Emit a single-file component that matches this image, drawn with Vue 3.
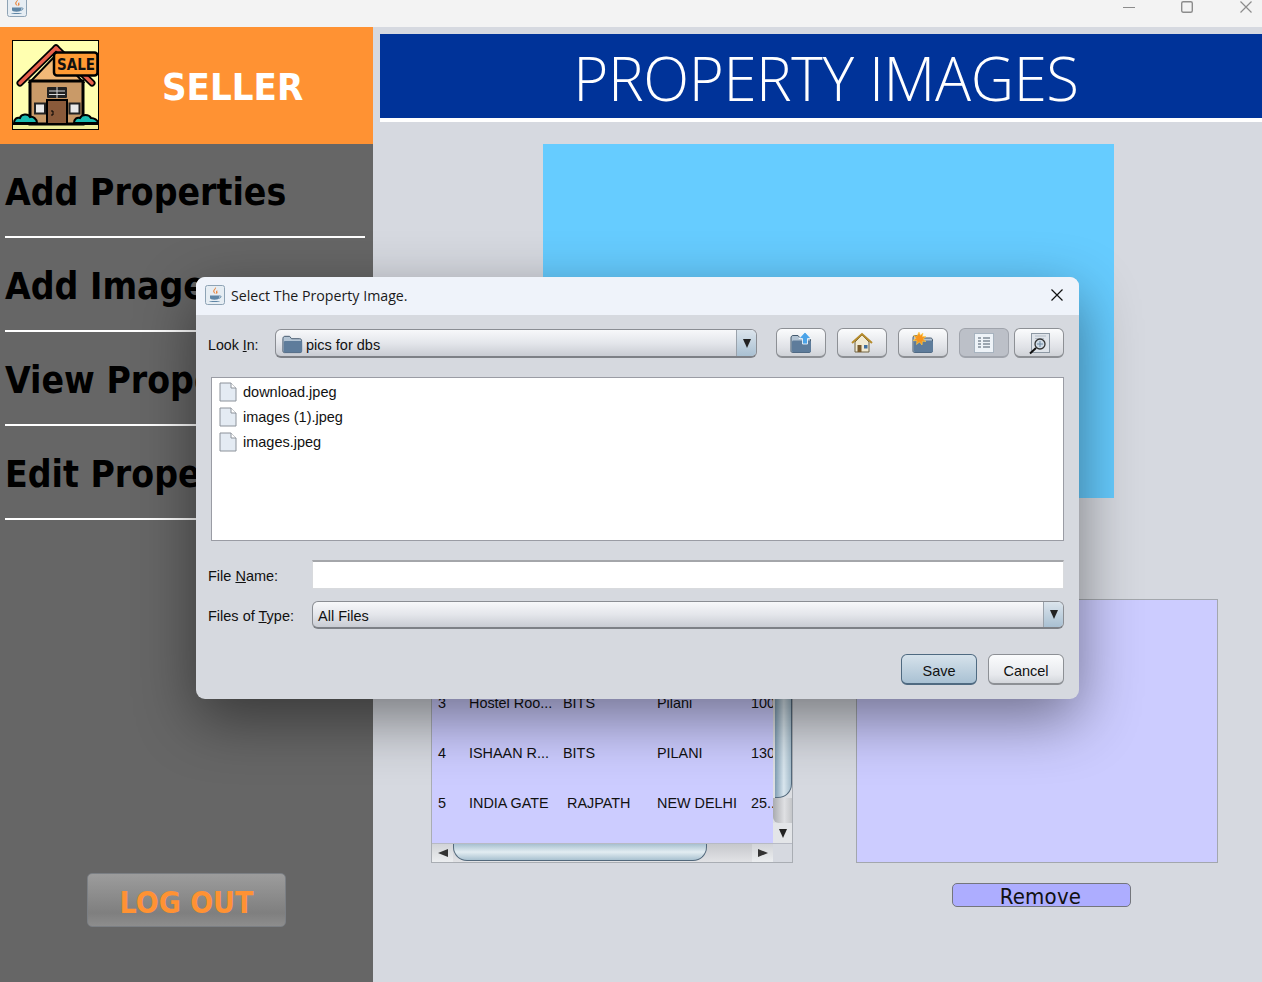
<script setup>
const menu = ['Add Properties', 'Add Images', 'View Properties', 'Edit Properties'];
const files = ['download.jpeg', 'images (1).jpeg', 'images.jpeg'];
const rows = [
  { id: 3, name: 'Hostel Roo...', area: 'BITS', city: 'Pilani', price: '100' },
  { id: 4, name: 'ISHAAN R...', area: 'BITS', city: 'PILANI', price: '130' },
  { id: 5, name: 'INDIA GATE', area: 'RAJPATH', city: 'NEW DELHI', price: '25...', shift: true }
];
</script>

<template>
  <div class="window">
    <svg class="defs" width="0" height="0">
      <symbol id="java" viewBox="0 0 20 20">
        <rect x="0.500" y="0.500" width="19" height="19" rx="2" fill="#e6edf3" stroke="#8ea3b5" />
        <path d="M10.500 2c1.500 2-2 3-1 5 .4.8 1 1.300 1 2-1-.6-2.500-1.500-2.300-3 .2-1.600 2.300-2.300 2.300-4z" fill="#e8833a" />
        <path d="M12.500 5c-.8.8-1.800 1.300-1.500 2.400.2.700.6 1.100.3 1.800 1.300-.8 1.500-1.800 1-2.700-.3-.5-.1-1 .2-1.500z" fill="#e8833a" />
        <path d="M5 10.500h9v2.500c0 1.200-1.500 1.700-4.500 1.700S5 14.200 5 13z" fill="#5f86a6" />
        <path d="M14 11h1.500c.8 0 .8 2-1.500 2.200" fill="none" stroke="#5f86a6" />
        <path d="M4 16h11c-1 1.300-10 1.300-11 0z" fill="#5f86a6" />
      </symbol>
      <symbol id="folder" viewBox="0 0 24 24">
        <path d="M2 7c0-1.500.8-2.500 2-2.500h5l2 2.500h8.500c1.200 0 2 .8 2 2V20c0 .8-.6 1.500-1.500 1.500H3.500C2.600 21.500 2 20.800 2 20z" fill="#b3c4d4" stroke="#43586c" />
        <path d="M3 11c0-1 .6-1.500 1.500-1.500h16c.8 0 1.500.5 1.500 1.500v9c0 .8-.6 1.500-1.500 1.500h-16C3.600 21.500 3 20.800 3 20z" fill="#5e7c9b" />
      </symbol>
      <symbol id="file" viewBox="0 0 18 20">
        <path d="M1 1h11l5 5v13H1z" fill="#e4ebf3" stroke="#8c929a" />
        <path d="M12 1v5h5" fill="#fff" stroke="#8c929a" />
      </symbol>
    </svg>

    <div class="titlebar">
      <svg class="app-icon" width="20" height="20"><use href="#java" /></svg>
      <div class="winbtns">
        <svg width="12" height="14" viewBox="0 0 12 14"><path d="M0 7.500h12" stroke="#8c8c8c" /></svg>
        <svg width="12" height="14" viewBox="0 0 12 14"><rect x="0.700" y="1.700" width="10.600" height="10.600" rx="1.500" fill="none" stroke="#8c8c8c" stroke-width="1.400" /></svg>
        <svg class="win-close" width="12" height="14" viewBox="0 0 12 14"><path d="M.5 1.500l11 11M11.500 1.500l-11 11" stroke="#8c8c8c" stroke-width="1.200" /></svg>
      </div>
    </div>

    <div class="content">
      <aside class="sidebar">
        <div class="brand">
          <svg class="logo" width="87" height="90" viewBox="0 0 87 90">
            <rect x="0.500" y="0.500" width="86" height="89" fill="#ffffb0" stroke="#000" />
            <rect x="1" y="84" width="85" height="5" fill="#f0f09a" />
            <path d="M18 42 45 14 71 42z" fill="#f2b877" stroke="#000" stroke-width="2" />
            <rect x="18" y="41" width="53" height="43" fill="#c99a68" stroke="#000" stroke-width="3" />
            <path d="M8 43 44 8" stroke="#000" stroke-width="7" stroke-linecap="round" />
            <path d="M44 8 80 43" stroke="#000" stroke-width="7" stroke-linecap="round" />
            <path d="M8 43 44 8" stroke="#e8604c" stroke-width="3.500" stroke-linecap="round" />
            <path d="M44 8 80 43" stroke="#e8604c" stroke-width="3.500" stroke-linecap="round" />
            <rect x="35" y="47" width="20" height="11" rx="1" fill="#222" />
            <path d="M37 51h16M37 54.500h16M45 47v11" stroke="#d8d8d8" />
            <rect x="35" y="60" width="20" height="24" fill="#8a5a3a" stroke="#000" stroke-width="2" />
            <path d="M39 71h2v4h-2" fill="none" stroke="#000" />
            <rect x="23" y="63.500" width="10" height="10" fill="#e9e9e9" stroke="#222" stroke-width="2" />
            <rect x="57.500" y="63.500" width="10" height="10" fill="#e9e9e9" stroke="#222" stroke-width="2" />
            <path d="M2 83c0-4 3-6 6-5 1-4 8-5 10-1 3-1 7 2 7 6z" fill="#1abcb0" stroke="#000" stroke-width="2" />
            <path d="M62 83c0-4 3-6 6-5 2-4 9-4 11 0 3 0 7 2 7 5z" fill="#1abcb0" stroke="#000" stroke-width="2" />
            <path d="M1 84h85" stroke="#000" stroke-width="2" />
            <rect x="42" y="12.500" width="43.500" height="23" rx="3" fill="#ff9a33" stroke="#000" stroke-width="2.500" />
            <text x="64" y="30" class="sale" text-anchor="middle">SALE</text>
          </svg>
          <span class="seller">SELLER</span>
        </div>
        <div v-for="item in menu" :key="item" class="menu-item">{{ item }}</div>
        <button class="logout">LOG OUT</button>
      </aside>

      <main class="main">
        <header class="heading">PROPERTY IMAGES</header>
        <div class="image-box"></div>
        <div class="panels">
          <div class="table-pane">
            <div class="table-wrap">
              <div class="rows">
                <div v-for="r in rows" :key="r.id" class="row">
                  <span>{{ r.id }}</span>
                  <span>{{ r.name }}</span>
                  <span :class="{ shifted: r.shift }">{{ r.area }}</span>
                  <span>{{ r.city }}</span>
                  <span>{{ r.price }}</span>
                </div>
              </div>
              <div class="vbar">
                <div class="vthumb"></div>
                <div class="vtrack"></div>
                <div class="varrow"><i class="tri"></i></div>
              </div>
            </div>
            <div class="hbar">
              <div class="harrow"><i class="tri-left"></i></div>
              <div class="htrack"><div class="hthumb"></div></div>
              <div class="harrow"><i class="tri-right"></i></div>
              <div class="corner"></div>
            </div>
          </div>
          <div class="preview-col">
            <div class="preview"></div>
            <button class="remove">Remove</button>
          </div>
        </div>
      </main>
    </div>

    <div class="dialog">
      <div class="dlg-title">
        <svg width="20" height="20"><use href="#java" /></svg>
        <span class="dlg-text">Select The Property Image.</span>
        <svg class="dlg-close" width="12" height="12" viewBox="0 0 12 12"><path d="M.5.5l11 11M11.500.5l-11 11" stroke="#111" stroke-width="1.200" /></svg>
      </div>
      <div class="dlg-body">
        <div class="lookin">
          <label class="lbl lbl-look">Look <u>I</u>n:</label>
          <div class="combo look-combo">
            <svg class="combo-folder" width="23" height="23"><use href="#folder" /></svg>
            <span class="combo-text">pics for dbs</span>
            <div class="combo-arrow"><i class="tri"></i></div>
          </div>
          <div class="tools">
            <button class="tool">
              <svg width="24" height="24" viewBox="0 0 24 24">
                <use href="#folder" />
                <path d="M16 1l6 6.500h-3.500V13h-5V7.500H10z" fill="#4ba3e8" stroke="#fff" stroke-width=".8" />
              </svg>
            </button>
            <button class="tool">
              <svg width="24" height="24" viewBox="0 0 24 24">
                <path d="M5 11v10h14V11L12 4z" fill="#f1ead2" stroke="#6e6243" />
                <path d="M2 12 12 3l10 9" fill="none" stroke="#b58b2c" stroke-width="2" />
                <rect x="7.500" y="14" width="4" height="7" fill="#7a5a2a" />
                <rect x="14" y="14" width="3.500" height="3.500" fill="#3f6f9f" />
              </svg>
            </button>
            <button class="tool">
              <svg width="24" height="24" viewBox="0 0 24 24">
                <use href="#folder" />
                <path d="M8 1l1.400 3.300L12 2l-.6 3.600L15 5.500l-2.700 2.400L15 10.500l-3.600-.3L11 14 8.500 11 5.500 13.500 6 9.800 2 9.500l3-2.200L2.500 4.500 6 5z" fill="#f7941d" stroke="#ffd34d" stroke-width=".6" />
              </svg>
            </button>
            <button class="tool pressed">
              <svg width="20" height="20" viewBox="0 0 20 20">
                <rect x="0.500" y="0.500" width="19" height="19" fill="#eef3f8" stroke="#a7b3bf" />
                <path d="M4 5h3M4 8h3M4 11h3M4 14h3M9 5h7M9 8h7M9 11h7M9 14h7" stroke="#4a5a68" stroke-width="1.200" />
              </svg>
            </button>
            <button class="tool">
              <svg width="24" height="24" viewBox="0 0 24 24">
                <rect x="4.500" y="2.500" width="18" height="19" fill="#dfe4ea" stroke="#8d98a3" />
                <path d="M8 5h11M8 7.500h9" stroke="#b3bcc6" />
                <circle cx="13" cy="13" r="5" fill="#cfdbe6" stroke="#333" stroke-width="1.300" />
                <path d="M10 13h6M13 10v6" stroke="#6f8aa3" />
                <path d="M9 17 3 22.500" stroke="#111" stroke-width="2" />
              </svg>
            </button>
          </div>
        </div>

        <div class="filelist">
          <div v-for="f in files" :key="f" class="file">
            <svg width="18" height="20"><use href="#file" /></svg>
            <span>{{ f }}</span>
          </div>
        </div>

        <div class="field-row name-row">
          <label class="lbl lbl-field">File <u>N</u>ame:</label>
          <div class="textfield"></div>
        </div>
        <div class="field-row type-row">
          <label class="lbl lbl-field">Files of <u>T</u>ype:</label>
          <div class="combo type-combo">
            <span class="combo-text">All Files</span>
            <div class="combo-arrow"><i class="tri"></i></div>
          </div>
        </div>
        <div class="actions">
          <button class="btn save">Save</button>
          <button class="btn">Cancel</button>
        </div>
      </div>
    </div>
  </div>
</template>

<style>
body {
  background: #d6d9e0;
}
</style>

<style scoped>
.window {
  position: relative;
  width: 1262px;
  height: 982px;
  overflow: hidden;
  display: flex;
  flex-direction: column;
  background: #d6d9e0;
  font-family: "Liberation Sans", Arial, sans-serif;
}
.defs {
  position: absolute;
}
.titlebar {
  height: 27px;
  flex: none;
  background: #f3f3f3;
  display: flex;
  align-items: flex-start;
  overflow: hidden;
}
.app-icon {
  margin: -3px 0 0 7px;
}
.winbtns {
  margin: 0 10px 0 auto;
  display: flex;
  gap: 46px;
}
.win-close {
  margin-left: 1px;
}
.content {
  flex: 1;
  display: flex;
  min-height: 0;
}
.sidebar {
  width: 373px;
  flex: none;
  background: #666666;
  display: flex;
  flex-direction: column;
  padding-bottom: 55px;
}
.brand {
  height: 117px;
  flex: none;
  background: #ff9233;
  display: flex;
  align-items: flex-start;
}
.logo {
  margin: 13px 0 0 12px;
  flex: none;
}
.sale {
  font-family: "DejaVu Sans Condensed", "DejaVu Sans", sans-serif;
  font-size: 15px;
  font-weight: 700;
  fill: #111;
}
.seller {
  margin: 37px 0 0 63px;
  font-family: "DejaVu Sans Condensed", "DejaVu Sans", sans-serif;
  font-weight: 700;
  font-size: 38px;
  line-height: 46px;
  color: #fff;
}
.menu-item {
  width: 360px;
  height: 94px;
  margin-left: 5px;
  box-sizing: border-box;
  padding-top: 24px;
  border-bottom: 2px solid #fff;
  font-family: "DejaVu Sans Condensed", "DejaVu Sans", sans-serif;
  font-weight: 700;
  font-size: 37px;
  line-height: 50px;
  color: #000;
  white-space: nowrap;
}
.logout {
  margin: auto 0 0 87px;
  width: 199px;
  height: 54px;
  padding: 5px 0 0;
  border: 1px solid #7b7f84;
  border-radius: 5px;
  background: linear-gradient(#9c9c9c, #7f7f7f 75%, #8d8d8d);
  font-family: "DejaVu Sans Condensed", "DejaVu Sans", sans-serif;
  font-weight: 700;
  font-size: 30px;
  color: #ff9233;
}
.main {
  flex: 1;
  display: flex;
  flex-direction: column;
  padding: 7px 0 0 7px;
  min-width: 0;
}
.heading {
  height: 84px;
  border-bottom: 4px solid #fff;
  background: #003399;
  color: #fff;
  font-family: "Open Sans", sans-serif;
  font-weight: 350;
  font-size: 60px;
  letter-spacing: -0.4px;
  line-height: 88px;
  text-align: center;
  padding-left: 10px;
  overflow: hidden;
}
.image-box {
  width: 571px;
  height: 354px;
  margin: 22px 0 0 163px;
  background: #66ccff;
}
.panels {
  display: flex;
  gap: 63px;
  margin: 101px 0 0 51px;
}
.table-pane {
  width: 362px;
  height: 264px;
  box-sizing: border-box;
  border: 1px solid #a9adb3;
  display: flex;
  flex-direction: column;
}
.table-wrap {
  flex: 1;
  display: flex;
  min-height: 0;
}
.rows {
  flex: 1;
  background: #ccccff;
  display: flex;
  flex-direction: column;
  justify-content: flex-end;
  padding-bottom: 15px;
  overflow: hidden;
}
.row {
  height: 50px;
  display: grid;
  grid-template-columns: 37px 94px 94px 94px 22px;
  align-items: center;
  font-size: 14.400px;
  color: #111;
  white-space: nowrap;
}
.row span {
  overflow: hidden;
}
.row span:first-child {
  padding-left: 6px;
}
.shifted {
  padding-left: 4px;
}
.tri {
  display: inline-block;
  border-left: 4.500px solid transparent;
  border-right: 4.500px solid transparent;
  border-top: 9px solid #222;
}
.tri-left,
.tri-right {
  display: inline-block;
  border-top: 4px solid transparent;
  border-bottom: 4px solid transparent;
}
.tri-left {
  border-right: 10px solid #333;
}
.tri-right {
  border-left: 10px solid #333;
}
.vbar {
  width: 19px;
  display: flex;
  flex-direction: column;
  background: #dcdee2;
}
.vthumb {
  flex: 1;
  margin: 0 0 0 2px;
  border-right: 1px solid #53697c;
  border-bottom: 1px solid #53697c;
  border-radius: 0 0 14px 0;
  background: linear-gradient(90deg, #7f9db3, #d9e6ee 55%, #a5bdcc);
}
.vtrack {
  height: 25px;
  background: linear-gradient(90deg, #a9abaf, #dfe0e3 60%, #c4c6c9);
  border-radius: 0 0 0 6px;
}
.varrow {
  height: 20px;
  display: flex;
  align-items: center;
  justify-content: center;
  background: #e3e5e8;
}
.hbar {
  height: 19px;
  flex: none;
  display: flex;
  border-top: 1px solid #b7bac4;
  box-sizing: border-box;
  background: linear-gradient(#d2d4d8, #eceef0);
}
.harrow {
  width: 21px;
  flex: none;
  display: flex;
  align-items: center;
  justify-content: center;
}
.htrack {
  width: 299px;
  flex: none;
  background: linear-gradient(#c6c8cc, #e2e3e6);
}
.hthumb {
  width: 254px;
  height: 17px;
  box-sizing: border-box;
  border: 1px solid #53697c;
  border-top: none;
  border-radius: 0 0 14px 14px;
  background: linear-gradient(#a7c0d0, #e3edf2 50%, #a9c1d0);
}
.corner {
  width: 19px;
  flex: none;
  background: #d6d9e0;
}
.preview-col {
  display: flex;
  flex-direction: column;
  align-items: center;
}
.preview {
  width: 362px;
  height: 264px;
  box-sizing: border-box;
  border: 1px solid #a3a7ad;
  background: #ccccff;
}
.remove {
  margin: 20px 0 0 9px;
  width: 179px;
  height: 24px;
  padding: 2px 2px 0 0;
  border: 1px solid #74767c;
  border-radius: 5px;
  background: #adadff;
  font-family: "DejaVu Sans Condensed", "DejaVu Sans", sans-serif;
  font-size: 22px;
  letter-spacing: 0.2px;
  line-height: 22px;
  color: #111;
  overflow: hidden;
}
.dialog {
  position: absolute;
  left: 196px;
  top: 277px;
  width: 883px;
  height: 422px;
  display: flex;
  flex-direction: column;
  border-radius: 9px;
  overflow: hidden;
  background: #d6d9df;
  box-shadow: 0 20px 60px rgba(0, 0, 0, 0.45);
}
.dlg-title {
  height: 38px;
  flex: none;
  box-sizing: border-box;
  background: #eff3fa;
  display: flex;
  align-items: center;
  padding: 0 16px 2px 9px;
  font-family: "Open Sans", sans-serif;
  font-size: 14.200px;
  color: #1a1a1a;
}
.dlg-text {
  margin-left: 6px;
}
.dlg-close {
  margin-left: auto;
}
.dlg-body {
  flex: 1;
  padding: 13px 15px 14px 12px;
  display: flex;
  flex-direction: column;
  font-size: 14.500px;
  color: #111;
}
.lookin {
  display: flex;
  align-items: flex-end;
  height: 30px;
}
.lbl-look {
  width: 67px;
  flex: none;
  padding-bottom: 5px;
  font-size: 14.200px;
}
.combo {
  box-sizing: border-box;
  display: flex;
  align-items: center;
  border: 1px solid #8a8d93;
  border-bottom: 2px solid #7d8086;
  border-radius: 6px;
  background: linear-gradient(#f7f8fa, #e4e6eb 50%, #c9ccd3);
  overflow: hidden;
}
.look-combo {
  width: 482px;
  height: 29px;
  flex: none;
}
.combo-folder {
  margin-left: 5px;
}
.combo-text {
  padding-top: 2px;
}
.look-combo .combo-text {
  margin-left: 2px;
  padding-top: 4px;
}
.combo-arrow {
  margin-left: auto;
  width: 19px;
  height: 100%;
  flex: none;
  display: flex;
  align-items: center;
  justify-content: center;
  border-left: 1px solid #9aa2ab;
  background: linear-gradient(#dbe4ec, #a9c0d2);
}
.tools {
  display: flex;
  margin-left: 19px;
}
.tool {
  width: 50px;
  height: 30px;
  padding: 0;
  display: flex;
  align-items: center;
  justify-content: center;
  border: 1px solid #8d9095;
  border-bottom-width: 2px;
  border-radius: 6px;
  background: linear-gradient(#fbfcfd, #dfe1e6 70%, #cfd2d7);
  margin-right: 11px;
}
.tool:nth-child(4) {
  margin-right: 5px;
}
.tool:last-child {
  margin-right: 0;
}
.tool.pressed {
  background: #bcc0c8;
  border-color: #a0a4ac;
}
.filelist {
  margin: 19px 0 0 3px;
  height: 164px;
  box-sizing: border-box;
  border: 1px solid #9a9ca4;
  background: #fff;
  padding-top: 1px;
}
.file {
  height: 25px;
  display: flex;
  align-items: center;
  padding-left: 7px;
  gap: 6px;
  color: #111;
}
.field-row {
  display: flex;
  align-items: center;
}
.name-row {
  margin-top: 19px;
  height: 29px;
}
.type-row {
  margin-top: 12px;
  height: 28px;
}
.lbl-field {
  width: 104px;
  flex: none;
  padding-top: 2px;
}
.textfield {
  flex: 1;
  height: 29px;
  box-sizing: border-box;
  background: #fff;
  border: 1px solid #d8dadd;
  border-top: 2px solid #a4a6aa;
}
.type-combo {
  flex: 1;
  height: 28px;
}
.type-combo .combo-text {
  margin-left: 5px;
}
.actions {
  margin-top: 25px;
  display: flex;
  justify-content: flex-end;
  gap: 11px;
}
.btn {
  width: 76px;
  height: 31px;
  padding: 3px 0 0;
  border: 1px solid #8d9095;
  border-bottom-width: 2px;
  border-radius: 6px;
  background: linear-gradient(#fbfcfd, #e7e9ed 70%, #d3d6db);
  font-family: "Liberation Sans", Arial, sans-serif;
  font-size: 14.500px;
  color: #111;
}
.btn.save {
  border-color: #4f6a81;
  background: linear-gradient(#d6e2eb, #a9c1d3);
}
</style>
